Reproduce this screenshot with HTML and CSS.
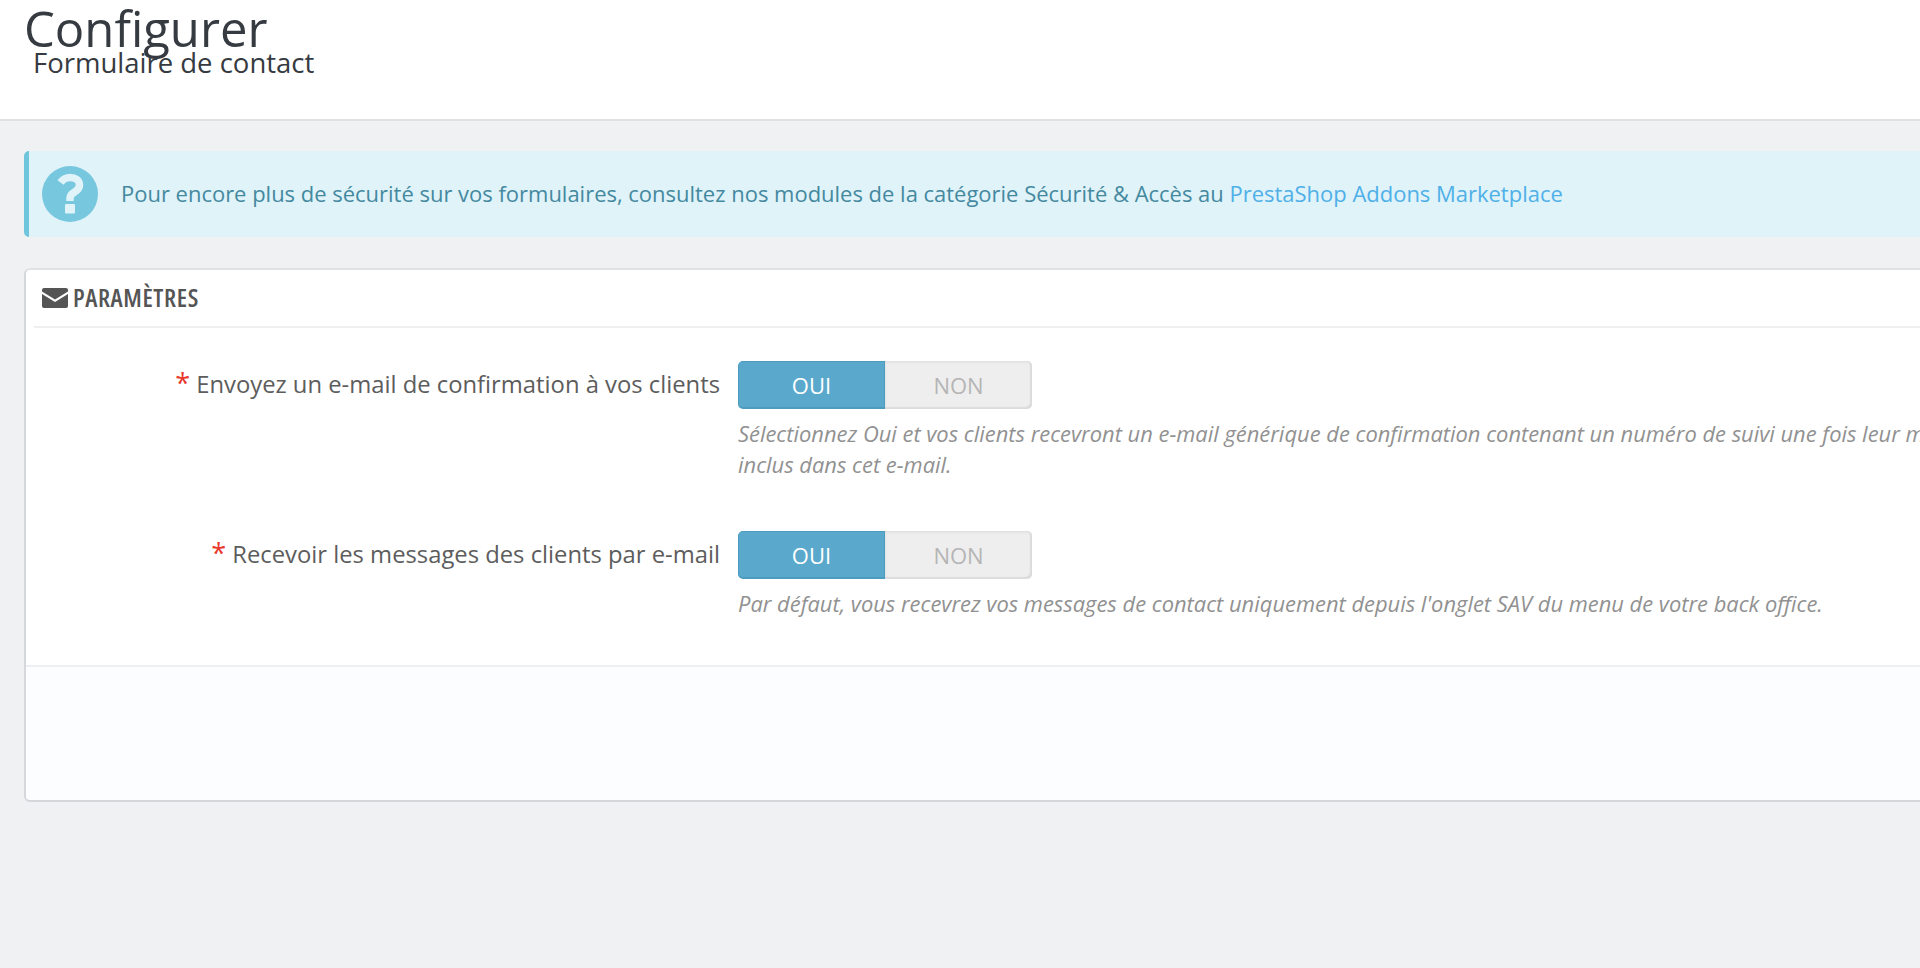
FILE: index.html
```html
<!DOCTYPE html>
<html lang="fr">
<head>
<meta charset="utf-8">
<title>Configurer</title>
<link rel="stylesheet" href="styles.css">
</head>
<body>
<header class="page-head">
  <h1 class="page-title">Configurer</h1>
  <h2 class="page-sub">Formulaire de contact</h2>
</header>
<main class="content">
  <div class="alert">
    <svg class="alert-icon" viewBox="0 0 56 56" aria-hidden="true">
      <circle cx="28" cy="28" r="28" fill="#77c7de"/>
      <path d="M18.500 16.500C21 13 24 11.500 28 11.500C33.500 11.500 37.500 14.500 37.500 19C37.500 23 34.500 25 32 26.500C29.500 28 28 29.500 28 32V35" fill="none" stroke="#dff3f9" stroke-width="7.500"/>
      <rect x="23" y="38" width="10" height="9.500" rx="1" fill="#dff3f9"/>
    </svg>
    <p class="alert-text">Pour encore plus de sécurité sur vos formulaires, consultez nos modules de la catégorie Sécurité &amp; Accès au <a href="#">PrestaShop Addons Marketplace</a></p>
  </div>
  <section class="panel">
    <div class="panel-head">
      <svg class="mail-icon" viewBox="0 0 26 20" aria-hidden="true">
        <path d="M0 2C0 .9.9 0 2 0h22c1.100 0 2 .9 2 2v1.500L13 11.500 0 3.500z" fill="#555"/>
        <path d="M0 6 13 14 26 6V18c0 1.100-.9 2-2 2H2c-1.100 0-2-.9-2-2z" fill="#555"/>
      </svg>
      <span class="panel-title">PARAMÈTRES</span>
    </div>
    <div class="panel-body">
      <div class="row">
        <label class="row-label"><span class="req">*</span> Envoyez un e-mail de confirmation à vos clients</label>
        <div class="row-field">
          <div class="toggle"><span class="on">OUI</span><span class="off">NON</span></div>
          <p class="help">Sélectionnez Oui et vos clients recevront un e-mail générique de confirmation contenant un numéro de suivi une fois leur message envoyé. Le numéro de suivi est<br>inclus dans cet e-mail.</p>
        </div>
      </div>
      <div class="row">
        <label class="row-label"><span class="req">*</span> Recevoir les messages des clients par e-mail</label>
        <div class="row-field">
          <div class="toggle"><span class="on">OUI</span><span class="off">NON</span></div>
          <p class="help">Par défaut, vous recevrez vos messages de contact uniquement depuis l'onglet SAV du menu de votre back office.</p>
        </div>
      </div>
    </div>
    <div class="panel-foot"></div>
  </section>
</main>
</body>
</html>
```
FILE: styles.css
```css
* { box-sizing: border-box; }
html, body { margin: 0; height: 100%; overflow: hidden; }
body { background: #eff1f2; font-family: "Open Sans", "Noto Sans", sans-serif; color: #555; }

.page-head { height: 121px; background: #fff; border-bottom: 2px solid #e0e1e2; padding: 4px 0 0 24px; }
.page-title { margin: 0; font-size: 49px; line-height: 48px; font-weight: 400; color: #363a41; }
.page-sub { margin: -5px 0 0 9px; font-size: 27.500px; line-height: 32px; font-weight: 400; color: #363a41; }

.content { padding: 30px 0 0 24px; width: 2300px; }

.alert { height: 86px; background: #dff3f9; border-left: 5px solid #6fc5dc; border-radius: 5px 0 0 5px; display: flex; align-items: center; padding-left: 13px; }
.alert-icon { width: 56px; height: 56px; flex: none; }
.alert-text { margin: 0 0 2px 23px; font-size: 21.980px; color: #44899f; white-space: nowrap; }
.alert-text a { color: #4fb0e8; text-decoration: none; }

.panel { margin-top: 31px; height: 534px; background: #fff; border: 1px solid #d5d8da; border-top: 2px solid #e0e2e3; border-bottom-width: 2px; border-left-width: 2px; border-radius: 6px 0 0 6px; display: flex; flex-direction: column; }
.panel-head { flex: none; margin-left: 8px; height: 58px; border-bottom: 2px solid #eeeff0; display: flex; align-items: center; padding-left: 8px; gap: 5px; color: #555; }
.panel-title { font-size: 25px; font-weight: 600; font-stretch: 75%; letter-spacing: .6px; margin-bottom: 2px; }
.mail-icon { width: 26px; height: 20px; flex: none; }

.panel-body { flex: 1; min-height: 0; padding-top: 33px; display: flex; flex-direction: column; gap: 51px; }
.row { display: flex; }
.row-label { width: 694px; text-align: right; font-size: 23.800px; line-height: 47px; color: #5d5d5d; flex: none; white-space: nowrap; }
.req { color: #e8382c; font-size: 27px; line-height: 0; }
.row-field { margin-left: 18px; }

.toggle { display: flex; width: 294px; height: 48px; border-radius: 5px; font-size: 22px; }
.on { width: 147px; background: #5aa9cc; border: 1px solid #4c9cc0; border-bottom-width: 2px; border-radius: 5px 0 0 5px; color: #fff; display: flex; align-items: center; justify-content: center; }
.off { flex: 1; background: #eeeeee; border-radius: 0 5px 5px 0; box-shadow: inset 0 1px 3px #dadada, inset -2px -2px 1px #dcdcdc; color: #b5b5b5; display: flex; align-items: center; justify-content: center; }

.help { margin: 9px 0 0; font-size: 21.900px; line-height: 31px; font-style: italic; color: #919191; white-space: nowrap; }

.panel-foot { flex: none; height: 135px; background: #fcfdfe; border-top: 2px solid #eeeff0; border-radius: 0 0 0 6px; }
```
